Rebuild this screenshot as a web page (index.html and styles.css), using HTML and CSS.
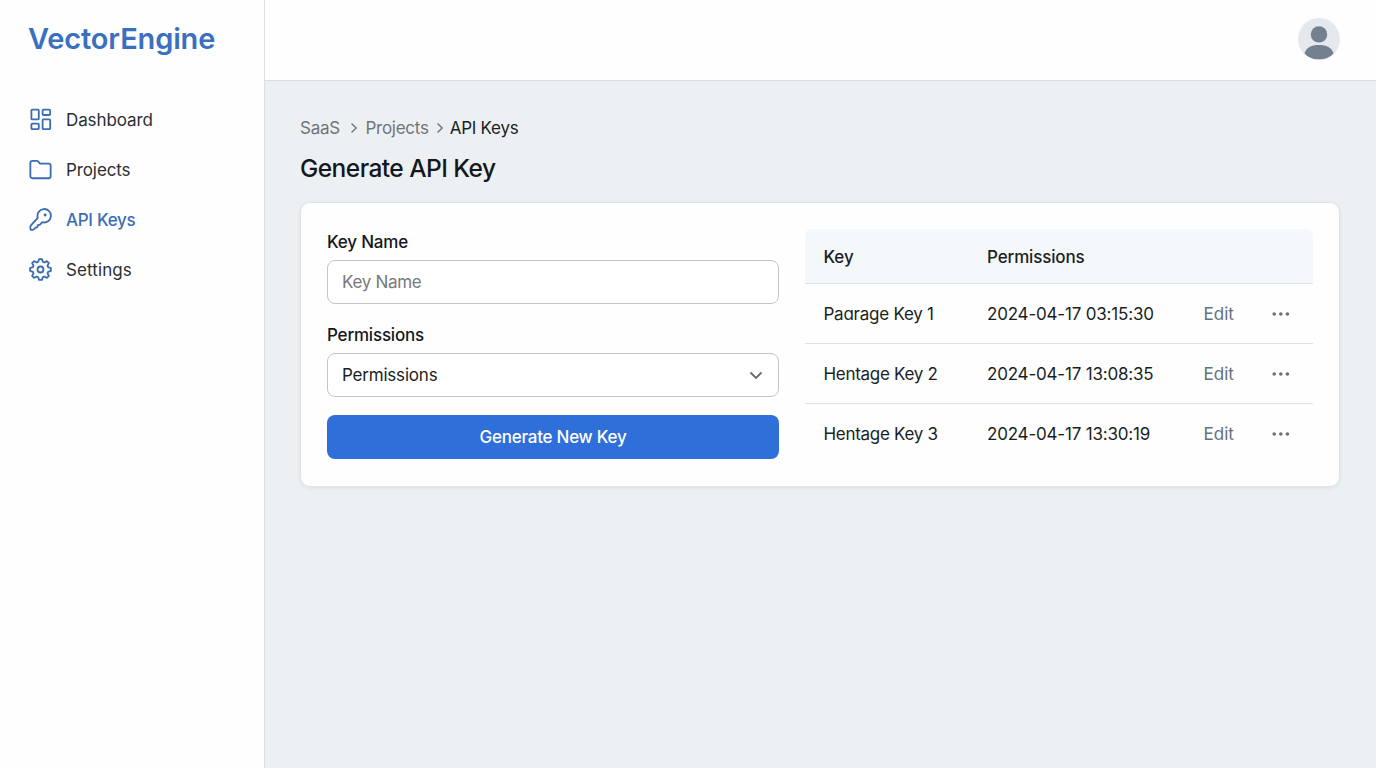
FILE: index.html
```html
<!DOCTYPE html>
<html lang="en">
<head>
<meta charset="utf-8">
<title>VectorEngine</title>
<link rel="stylesheet" href="styles.css">
</head>
<body>
<div class="app">
  <aside class="sidebar">
    <div class="brand">VectorEngine</div>
    <nav class="nav">
      <a class="nav-item"><svg class="nav-icon" viewBox="0 0 24 24"><rect x="2.500" y="1.700" width="7.700" height="10.200" rx="1"/><rect x="14.200" y="1.700" width="7.900" height="5.600" rx="1"/><rect x="2.500" y="16.300" width="7.700" height="5.800" rx="1"/><rect x="14.200" y="11.800" width="7.900" height="10.300" rx="1"/></svg><span>Dashboard</span></a>
      <a class="nav-item"><svg class="nav-icon" viewBox="0 0 24 24"><path d="M1.400 5a2 2 0 0 1 2-2h4.800a2 2 0 0 1 1.500.7l1.900 2.200h9a2 2 0 0 1 2 2v11.200a2 2 0 0 1-2 2H3.400a2 2 0 0 1-2-2z"/></svg><span>Projects</span></a>
      <a class="nav-item active"><svg class="nav-icon" viewBox="0 0 24 24"><path d="M9.200 10.200a7 7 0 1 1 4.700 4.600l-2.700 2.700-2 .3-.5 2.100-1.800.5-2 1.900a2 2 0 0 1-1.400.5H2.700a1.300 1.300 0 0 1-1.300-1.300v-2a2 2 0 0 1 .6-1.400z"/><circle class="dot" cx="16.800" cy="7.300" r="1.500"/></svg><span>API Keys</span></a>
      <a class="nav-item settings"><svg class="nav-icon" viewBox="0 0 24 24"><path d="M9.500 4.100 10.500 1.140H13.500L14.500 4.100 15.900 4.700 18.700 3.270 20.730 5.300 19.300 8.100 19.900 9.500 22.860 10.500V13.500L19.900 14.500 19.300 15.900 20.730 18.700 18.700 20.730 15.900 19.300 14.500 19.900 13.500 22.860H10.500L9.500 19.900 8.100 19.300 5.300 20.730 3.270 18.700 4.700 15.900 4.100 14.500 1.140 13.500V10.500L4.100 9.500 4.700 8.100 3.270 5.300 5.300 3.270 8.100 4.700z"/><circle cx="12" cy="12" r="3.100"/></svg><span>Settings</span></a>
    </nav>
  </aside>
  <div class="main">
    <header class="topbar">
      <svg class="avatar" viewBox="0 0 42 42"><defs><clipPath id="disc"><circle cx="21" cy="21" r="21"/></clipPath></defs><circle cx="21" cy="21" r="21" fill="#e5e8ec"/><g clip-path="url(#disc)" fill="#738090"><circle cx="21" cy="16.400" r="8.200"/><path d="M6.500 35.500c1.600-6 7-8.500 14.500-8.500s12.900 2.500 14.500 8.500c-3 3.700-8.300 5.800-14.500 5.800S9.500 39.200 6.500 35.500z"/></g></svg>
    </header>
    <main class="content">
      <div class="crumbs"><span>SaaS</span><svg class="sep sep-a" viewBox="0 0 8 12"><path d="M1.500 1.500 6.200 6l-4.700 4.500"/></svg><span>Projects</span><svg class="sep sep-b" viewBox="0 0 8 12"><path d="M1.500 1.500 6.200 6l-4.700 4.500"/></svg><span class="current">API Keys</span></div>
      <h1 class="title">Generate API Key</h1>
      <section class="card">
        <form class="form">
          <label class="label" for="name">Key Name</label>
          <input class="field" id="name" placeholder="Key Name">
          <div class="label l-perm">Permissions</div>
          <div class="field select"><span>Permissions</span><svg class="chev" viewBox="0 0 14 9"><path d="m1.500 1.500 5.500 5.500 5.500-5.500"/></svg></div>
          <button class="button" type="button">Generate New Key</button>
        </form>
        <div class="table">
          <div class="row head"><span>Key</span><span>Permissions</span></div>
          <div class="row"><span class="key first">Paɑrage Key 1</span><span class="date">2024-04-17 03:15:30</span><a class="edit">Edit</a><svg class="more" viewBox="0 0 18 4"><circle cx="2.200" cy="2" r="1.800"/><circle cx="8.800" cy="2" r="1.800"/><circle cx="15.400" cy="2" r="1.800"/></svg></div>
          <div class="row"><span class="key">Hentage Key 2</span><span class="date">2024-04-17 13:08:35</span><a class="edit">Edit</a><svg class="more" viewBox="0 0 18 4"><circle cx="2.200" cy="2" r="1.800"/><circle cx="8.800" cy="2" r="1.800"/><circle cx="15.400" cy="2" r="1.800"/></svg></div>
          <div class="row"><span class="key">Hentage Key 3</span><span class="date">2024-04-17 13:30:19</span><a class="edit">Edit</a><svg class="more" viewBox="0 0 18 4"><circle cx="2.200" cy="2" r="1.800"/><circle cx="8.800" cy="2" r="1.800"/><circle cx="15.400" cy="2" r="1.800"/></svg></div>
        </div>
      </section>
    </main>
  </div>
</div>
</body>
</html>
```
FILE: styles.css
```css
* { box-sizing: border-box; }
body { margin: 0; font-family: Inter, "Liberation Sans", sans-serif; font-size: 17px; color: #1b1e23; background: #ecf0f2; }
svg { display: block; flex: none; }
.app { display: flex; height: 768px; overflow: hidden; }
.sidebar { width: 265px; flex: none; background: #fefefe; border-right: 1px solid #dcdfe3; padding-top: 19px; }
.brand { margin-left: 28px; height: 40px; line-height: 40px; font-size: 29px; font-weight: 600; letter-spacing: -.15px; color: #3b6fbf; white-space: nowrap; }
.nav { margin-top: 36px; }
.nav-item { display: flex; align-items: center; gap: 14px; height: 50px; padding-left: 29px; color: #2b2e34; letter-spacing: -.1px; }
.nav-item.active { color: #3b6db5; font-weight: 500; letter-spacing: -.3px; }
.nav-item.settings { letter-spacing: .1px; }
.nav-icon { width: 23px; height: 23px; margin-bottom: 1px; fill: none; stroke: #3c6cb3; stroke-width: 1.9; stroke-linejoin: round; stroke-linecap: round; }
.nav-icon .dot { fill: #3c6cb3; stroke: none; }
.main { flex: 1; min-width: 0; }
.topbar { height: 81px; background: #fefefe; border-bottom: 1px solid #d9dde0; display: flex; justify-content: flex-end; padding: 18px 36px 0 0; }
.avatar { width: 42px; height: 42px; }
.content { padding: 35px 36px 0 35px; }
.crumbs { display: flex; align-items: center; height: 24px; letter-spacing: -.25px; color: #707479; white-space: nowrap; }
.crumbs .current { color: #1b1e23; }
.sep { width: 8px; height: 12px; fill: none; stroke: #707479; stroke-width: 1.4; }
.sep-a { margin: 0 7px 0 10.500px; }
.sep-b { margin: 0 6px 0 7px; }
.title { margin: 10px 0 0; height: 36px; line-height: 36px; font-size: 24.500px; font-weight: 500; letter-spacing: -.55px; color: #14181e; }
.card { margin-top: 16px; height: 285px; padding: 26px; display: flex; gap: 26px; background: #fefefe; border: 1px solid #e1e4e7; border-radius: 10px; box-shadow: 0 1px 4px rgba(30, 35, 45, .07); }
.form { width: 452px; flex: none; letter-spacing: -.2px; }
.label { display: block; height: 25px; line-height: 26px; font-weight: 500; color: #14171b; }
.field { display: flex; align-items: center; justify-content: space-between; width: 100%; height: 44px; margin: 6px 0 0; padding: 0 15px 0 14px; border: 1px solid #c4c5c9; border-radius: 8px; background: #fff; font: inherit; letter-spacing: inherit; color: #1b1e23; }
.field::placeholder { color: #77797c; opacity: 1; letter-spacing: -.3px; }
.l-perm { margin-top: 18px; }
.chev { width: 14px; height: 9px; fill: none; stroke: #67696e; stroke-width: 1.8; }
.button { display: block; width: 100%; height: 44px; margin-top: 18px; padding: 0; border: 0; border-radius: 8px; background: #2f6fd9; color: #fff; font: inherit; font-weight: 500; letter-spacing: -.25px; }
.table { flex: 1; }
.row { display: grid; grid-template-columns: 163.500px 216.500px 68px 18px; align-items: center; height: 60px; padding-left: 18.500px; border-bottom: 1px solid #dfe2e4; white-space: nowrap; }
.row:last-child { border-bottom: 0; }
.head { height: 55px; padding-top: 1px; background: #f4f8fa; border-radius: 6px 6px 0 0; font-weight: 500; letter-spacing: -.15px; }
.key { letter-spacing: -.3px; }
.key.first { letter-spacing: -.25px; }
.date { letter-spacing: -.19px; }
.edit { color: #637080; }
.more { width: 18px; height: 4px; fill: #6b7077; }
```
